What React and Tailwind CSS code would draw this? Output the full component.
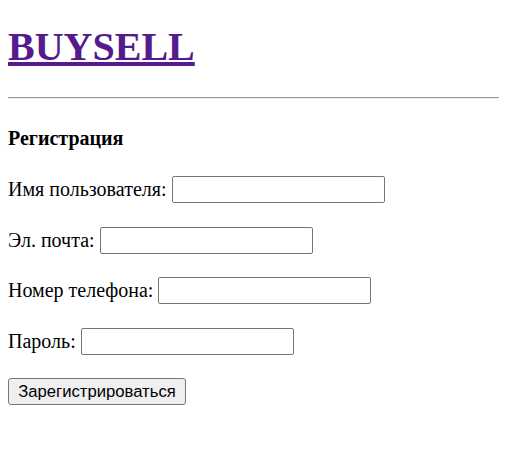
export default function App() {
  const fields = [
    { id: "username", label: "Имя пользователя:", type: "text" },
    { id: "email", label: "Эл. почта:", type: "email" },
    { id: "phone", label: "Номер телефона:", type: "tel" },
    { id: "password", label: "Пароль:", type: "password" },
  ];

  return (
    <div className="min-h-screen bg-white px-[8px] font-['Liberation_Serif',serif] text-black">
      <h1 className="pt-[24px] text-[40px] font-bold leading-[46px]">
        <a href="#" className="text-[#551a8b] underline">
          BUYSELL
        </a>
      </h1>
      <hr className="mt-[27px] w-[491px] border-t border-b border-t-[#9a9a9a] border-b-[#eeeeee]" />
      <h4 className="mt-[28px] text-[20px] font-bold leading-[23px]">Регистрация</h4>
      <form className="mt-[26px] flex flex-col gap-[23.6px]" onSubmit={(e) => e.preventDefault()}>
        {fields.map((f) => (
          <div key={f.id} className="flex h-[27px] items-center text-[20px] leading-[23px]">
            <label htmlFor={f.id}>{f.label}</label>
            <input
              id={f.id}
              type={f.type}
              className="ml-[5px] h-[27px] w-[213px] rounded-[2px] border border-[#767676] bg-white px-[2px] text-[16px]"
            />
          </div>
        ))}
        <div>
          <button
            type="submit"
            className="h-[27px] w-[178px] rounded-[3px] border border-[#767676] bg-[#efefef] font-['Liberation_Sans',Arial,sans-serif] text-[16.67px] leading-[19px] text-black"
          >
            Зарегистрироваться
          </button>
        </div>
      </form>
    </div>
  );
}
